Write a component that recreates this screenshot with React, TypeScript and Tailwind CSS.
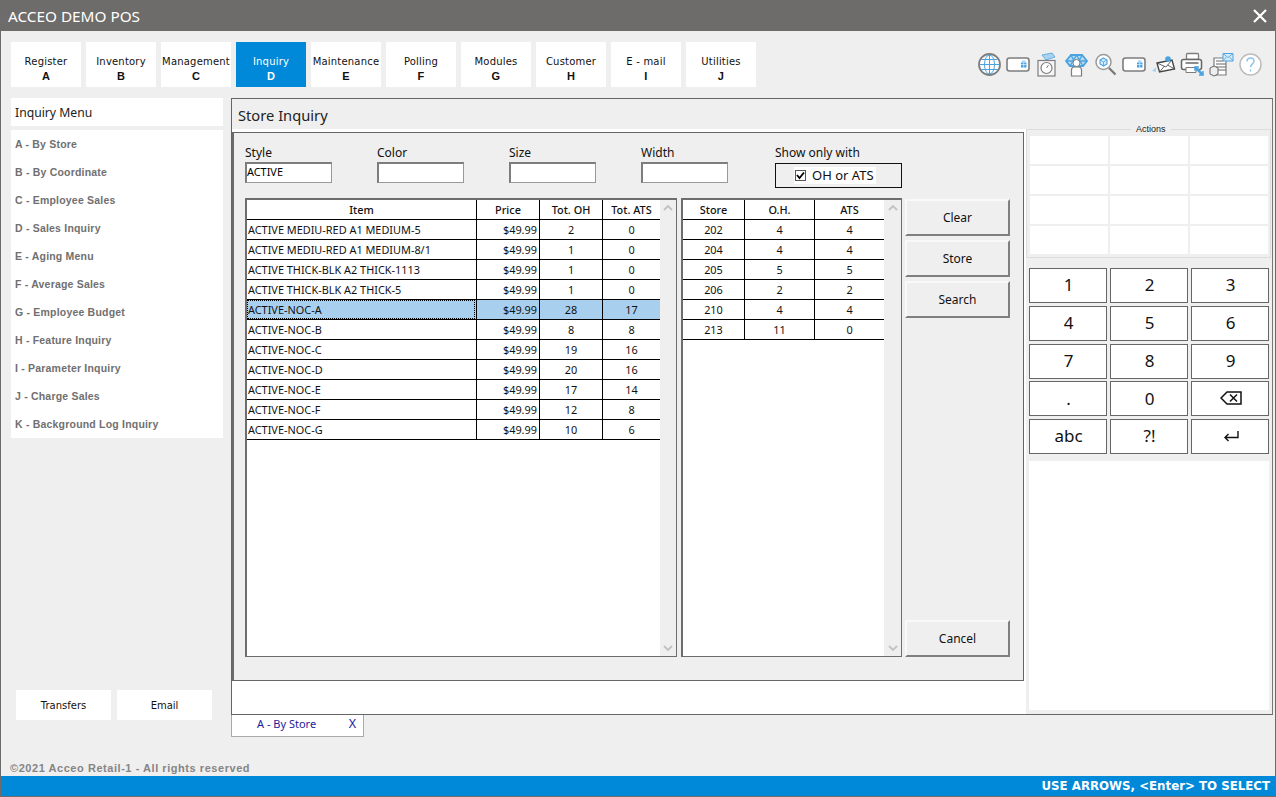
import type { ReactNode } from "react";

const tabs = [
  ["Register", "A"], ["Inventory", "B"], ["Management", "C"], ["Inquiry", "D"], ["Maintenance", "E"],
  ["Polling", "F"], ["Modules", "G"], ["Customer", "H"], ["E - mail", "I"], ["Utilities", "J"],
];

const menu = [
  "A - By Store", "B - By Coordinate", "C - Employee Sales", "D - Sales Inquiry", "E - Aging Menu", "F - Average Sales",
  "G - Employee Budget", "H - Feature Inquiry", "I - Parameter Inquiry", "J - Charge Sales", "K - Background Log Inquiry",
];

const items: [string, string, number, number][] = [
  ["ACTIVE MEDIU-RED A1 MEDIUM-5", "$49.99", 2, 0],
  ["ACTIVE MEDIU-RED A1 MEDIUM-8/1", "$49.99", 1, 0],
  ["ACTIVE THICK-BLK A2 THICK-1113", "$49.99", 1, 0],
  ["ACTIVE THICK-BLK A2 THICK-5", "$49.99", 1, 0],
  ["ACTIVE-NOC-A", "$49.99", 28, 17],
  ["ACTIVE-NOC-B", "$49.99", 8, 8],
  ["ACTIVE-NOC-C", "$49.99", 19, 16],
  ["ACTIVE-NOC-D", "$49.99", 20, 16],
  ["ACTIVE-NOC-E", "$49.99", 17, 14],
  ["ACTIVE-NOC-F", "$49.99", 12, 8],
  ["ACTIVE-NOC-G", "$49.99", 10, 6],
];

const stores = [
  [202, 4, 4], [204, 4, 4], [205, 5, 5], [206, 2, 2], [210, 4, 4], [213, 11, 0],
];

const G = "#7d7d7d";
const B = "#4aa3e0";

function Ico({ children }: { children: ReactNode }) {
  return (
    <svg width="25" height="25" viewBox="0 0 25 25" fill="none" className="shrink-0 w-[25px]">
      {children}
    </svg>
  );
}

function Globe() {
  return (
    <Ico>
      <circle cx="12.5" cy="12.5" r="10.5" stroke={G} strokeWidth="1.8" fill="#fff" />
      <ellipse cx="12.5" cy="12.5" rx="5" ry="9.5" stroke={B} />
      <path d="M3 12.5h19M4.5 7.5h16M4.5 17.5h16M12.5 3v19" stroke={B} />
    </Ico>
  );
}

function Card() {
  return (
    <Ico>
      <rect x="1" y="6" width="22" height="13" rx="2.5" stroke={G} strokeWidth="1.6" fill="#fff" />
      <path d="M15 10.5h5.500v5H15z" fill={B} />
      <path d="M16 8.500h3.500v1.500H16z" fill="#a9d3f0" />
      <path d="M15 12.500h5.500M17.700 10.500v5" stroke="#fff" strokeWidth=".6" />
    </Ico>
  );
}

function Clock() {
  return (
    <Ico>
      <rect x="3" y="8.500" width="17" height="15.500" stroke={G} strokeWidth="1.2" fill="#f6f6f6" />
      <circle cx="11.500" cy="16" r="5.500" stroke={G} strokeWidth="1.2" fill="#fff" />
      <path d="M11.500 16l2-3" stroke={G} />
      <path d="M7 3l10-2 3 4-9 3z" fill="#a9d3f0" stroke={B} strokeWidth=".8" />
    </Ico>
  );
}

function People() {
  return (
    <Ico>
      <path d="M2 9l5-6h11l5 6-4 5H6z" fill="#bcdcf3" stroke={B} strokeWidth="1.800" />
      <path d="M2 9h21M7 3l5.500 11L18 3M6 14l6.500-11L19 14" stroke={B} strokeWidth="1.300" />
      <circle cx="12.500" cy="11" r="3.500" fill="#fff" stroke={G} />
      <path d="M7.500 24v-6q0-3 3-3h4q3 0 3 3v6z" fill="#fff" stroke={G} strokeWidth="1.200" />
    </Ico>
  );
}

function Search() {
  return (
    <Ico>
      <circle cx="10.500" cy="10" r="7.500" stroke="#9a9a9a" strokeWidth="1.500" fill="#fff" />
      <path d="M16 16l6.500 6.500" stroke="#777" strokeWidth="2.200" />
      <path d="M10.500 6l3.500 2v4l-3.500 2-3.500-2V8z" stroke={B} strokeWidth="1.100" fill="#d7ebf8" />
      <path d="M7 8l3.500 2L14 8M10.500 10v4" stroke={B} strokeWidth=".8" />
    </Ico>
  );
}

function Mail() {
  return (
    <Ico>
      <path d="M6 11l15-3 2.500 9-15 3z" fill="#fff" stroke="#444" strokeWidth="1.400" />
      <path d="M6 11l9 4 6-7M8.500 20l5-6M23.500 17l-7-4" stroke="#555" strokeWidth=".9" />
      <circle cx="17" cy="7" r="2.800" fill={B} />
      <path d="M1 19l4-4v5z" fill="#a9d3f0" />
    </Ico>
  );
}

function Printer() {
  return (
    <Ico>
      <rect x="6.500" y="1.500" width="12" height="6" rx="1" stroke={G} strokeWidth="1.300" fill="#fff" />
      <rect x="1.500" y="7.500" width="20" height="10" rx="2" stroke="#666" strokeWidth="1.500" fill="#fff" />
      <path d="M5.500 11h13" stroke="#666" strokeWidth="1.500" />
      <path d="M6 15.500h10v5H6z" stroke={G} fill="#fff" />
      <path d="M15 15l8 8" stroke={B} strokeWidth="2.500" />
      <path d="M15 19v-4h4M23 19v4h-4" stroke={B} strokeWidth="1.400" />
    </Ico>
  );
}

function MailForm() {
  return (
    <Ico>
      <path d="M5 6h12v17H5z" fill="#fff" stroke={G} strokeWidth="1.200" />
      <path d="M7 9h7M7 12h10M7 15h10M7 18h10" stroke="#666" strokeWidth="1.200" />
      <path d="M1 16l4-2 4 2v6l-4 2-4-2z" fill="#eee" stroke="#666" />
      <path d="M14 1.500h10v7.500H14z" fill="#d7ebf8" stroke={B} />
      <path d="M14 1.500l5 4 5-4M14 9l3.500-4M24 9l-3.500-4" stroke={B} strokeWidth=".8" />
    </Ico>
  );
}

function Help() {
  return (
    <Ico>
      <circle cx="12.500" cy="12.500" r="10.500" stroke="#bcbcbc" strokeWidth="1.500" fill="#fff" />
      <path d="M9 9.500q.2-3.500 3.500-3.500 3.500 0 3.500 3.200c0 2.500-3.500 3-3.500 6" stroke="#8fc4ea" strokeWidth="1.500" />
      <path d="M12.500 17.500v2" stroke="#8fc4ea" strokeWidth="1.500" />
    </Ico>
  );
}

function Field({ label, value, className }: { label: string; value?: string; className: string }) {
  return (
    <div className={className}>
      <div className="text-[12px] leading-[16px] h-[16px] text-[#111]">{label}</div>
      <div className="mt-[1px] h-[21px] w-[87px] bg-white border-2 border-[#7d7d7d] border-r border-b border-r-[#999] border-b-[#999] text-[10.900px] leading-[15px] text-black">
        {value}
      </div>
    </div>
  );
}

function Cell({ children, className }: { children?: ReactNode; className: string }) {
  return <div className={`h-[20px] leading-[20px] border-b border-black ${className}`}>{children}</div>;
}

function Scroll() {
  return (
    <div className="flex-1 bg-[#efefef] flex flex-col justify-between items-center py-[5px]">
      <svg width="10" height="6" viewBox="0 0 10 6" fill="none"><path d="M1 5l4-4 4 4" stroke="#c2c2c2" strokeWidth="1.800" /></svg>
      <svg width="10" height="6" viewBox="0 0 10 6" fill="none"><path d="M1 1l4 4 4-4" stroke="#c2c2c2" strokeWidth="1.800" /></svg>
    </div>
  );
}

function ActionButton({ label, className }: { label: string; className?: string }) {
  return (
    <div className={`h-[37px] w-[105px] flex items-center justify-center bg-[#efefef] border-2 border-[#f9f9f9] border-r-[#7f7f7f] border-b-[#7f7f7f] text-[12px] text-[#111] ${className ?? ""}`}>
      {label}
    </div>
  );
}

function Key({ children }: { children: ReactNode }) {
  return (
    <div className="h-[35px] pb-[1px] pl-[1px] flex items-center justify-center bg-white border border-[#666] text-[17px] text-[#111]">
      {children}
    </div>
  );
}

export default function App() {
  return (
    <div className="w-[1276px] h-[797px] flex flex-col bg-[#efefef] border border-[#6e6c6a] overflow-hidden font-['Noto_Sans',sans-serif]">
      <div className="h-[30px] shrink-0 bg-[#6e6c6a] flex items-center justify-between pl-[7px] pr-[7px] text-white text-[15.300px]">
        <span>ACCEO DEMO POS</span>
        <svg width="16" height="16" viewBox="0 0 16 16" fill="none"><path d="M2 2l12 12M14 2L2 14" stroke="#fff" strokeWidth="2.200" /></svg>
      </div>

      <div className="flex items-center pl-[10px] pt-[11px] h-[56px] shrink-0">
        <div className="flex gap-[5px]">
          {tabs.map(([name, key]) => (
            <div
              key={key}
              className={`w-[70px] h-[45px] flex flex-col items-center pt-[12px] leading-[15px] tracking-[0.2px] font-['DejaVu_Sans',sans-serif] ${name === "Inquiry" ? "bg-[#0089d9] text-white" : "bg-white text-[#111]"}`}
            >
              <span className="whitespace-nowrap text-[10px]">{name}</span>
              <span className="font-['Liberation_Sans',sans-serif] font-bold text-[11px]">{key}</span>
            </div>
          ))}
        </div>
        <div className="flex gap-[4px] ml-[221px]">
          <Globe /><Card /><Clock /><People /><Search /><Card /><Mail /><Printer /><MailForm /><Help />
        </div>
      </div>

      <div className="flex mt-[11px] pl-[10px] h-[617px] shrink-0">
        <div className="w-[212px] shrink-0 flex flex-col">
          <div className="h-[28px] bg-white text-[12.200px] leading-[30px] pl-[4px] text-[#222]">Inquiry Menu</div>
          <div className="mt-[4px] h-[308px] bg-white">
            {menu.map((m) => (
              <div key={m} className="h-[28px] leading-[28px] pl-[4px] text-[10.500px] font-bold text-[#707070] font-['Liberation_Sans',sans-serif] tracking-[0.2px]">{m}</div>
            ))}
          </div>
          <div className="mt-auto mb-[-5px] flex gap-[6px] pl-[5px]">
            <div className="w-[95px] h-[30px] pt-[1px] bg-white flex items-center justify-center text-[10px] font-['DejaVu_Sans',sans-serif] text-[#111]">Transfers</div>
            <div className="w-[95px] h-[30px] pt-[1px] bg-white flex items-center justify-center text-[10px] font-['DejaVu_Sans',sans-serif] text-[#111]">Email</div>
          </div>
        </div>

        <div className="ml-[8px] w-[1042px] h-[617px] shrink-0 border border-[#666] border-r-[#777] bg-white flex flex-col">
          <div className="h-[30px] bg-[#efefef] pl-[6px] text-[14.700px] leading-[32px] text-[#222] shrink-0">Store Inquiry</div>
          <div className="flex flex-1">
            <div className="w-[792px] shrink-0 pt-[3px]">
              <div className="h-[549px] w-[792px] bg-[#efefef] border-2 border-t border-r border-b border-[#666] border-l-[#6b6b6b] pl-[11px] pt-[12px] flex flex-col">
                <div className="flex h-[44px]">
                  <Field label="Style" value="ACTIVE" className="w-[132px]" />
                  <Field label="Color" className="w-[132px]" />
                  <Field label="Size" className="w-[132px]" />
                  <Field label="Width" className="w-[134px]" />
                  <div>
                    <div className="text-[12px] leading-[16px] h-[16px] text-[#111]">Show only with</div>
                    <div className="mt-[2px] w-[127px] h-[25px] border border-[#111] flex items-center pl-[18px]">
                      <div className="flex items-center bg-white h-[17px] pl-[1px] pr-[2px]">
                        <div className="w-[11px] h-[11px] border border-[#555] bg-white flex items-center justify-center">
                          <svg width="9" height="9" viewBox="0 0 9 9" fill="none"><path d="M1 4l2.500 3L8 1.500" stroke="#000" strokeWidth="1.800" /></svg>
                        </div>
                        <span className="ml-[6px] text-[13px] text-[#111]">OH or ATS</span>
                      </div>
                    </div>
                  </div>
                </div>

                <div className="flex mt-[9px] h-[459px]">
                  <div className="w-[432px] h-[459px] flex bg-white border-2 border-r border-b border-[#6d6d6d] text-[10.900px] text-[#111]">
                    <div className="w-[413px] shrink-0">
                      <div className="grid grid-cols-[230px_63px_63px_57px]">
                        <Cell className="text-center border-r font-medium">Item</Cell>
                        <Cell className="text-center border-r font-medium">Price</Cell>
                        <Cell className="text-center border-r font-medium">Tot. OH</Cell>
                        <Cell className="text-center font-medium">Tot. ATS</Cell>
                        {items.map(([name, price, oh, ats]) => {
                          const sel = name === "ACTIVE-NOC-A";
                          const bg = sel ? "bg-[#a9cfef]" : "";
                          return (
                            <div key={name} className="contents">
                              <Cell className={`border-r pl-[1px] whitespace-nowrap ${bg}`}>
                                <div className={sel ? "h-[19px] ml-[-1px] mr-[1px] pl-[1px] outline outline-dotted outline-black -outline-offset-1" : ""}>{name}</div>
                              </Cell>
                              <Cell className={`border-r text-right pr-[2px] ${bg}`}>{price}</Cell>
                              <Cell className={`border-r text-center ${bg}`}>{oh}</Cell>
                              <Cell className={`text-center ${bg}`}>{ats}</Cell>
                            </div>
                          );
                        })}
                      </div>
                    </div>
                    <Scroll />
                  </div>

                  <div className="ml-[4px] w-[221px] h-[459px] flex bg-white border-2 border-r border-b border-[#6d6d6d] text-[10.900px] text-[#111]">
                    <div className="w-[201px] shrink-0">
                      <div className="grid grid-cols-[62px_70px_69px]">
                        <Cell className="text-center border-r font-medium">Store</Cell>
                        <Cell className="text-center border-r font-medium">O.H.</Cell>
                        <Cell className="text-center font-medium">ATS</Cell>
                        {stores.map(([store, oh, ats]) => (
                          <div key={store} className="contents">
                            <Cell className="text-center border-r">{store}</Cell>
                            <Cell className="text-center border-r">{oh}</Cell>
                            <Cell className="text-center">{ats}</Cell>
                          </div>
                        ))}
                      </div>
                    </div>
                    <Scroll />
                  </div>

                  <div className="ml-[3px] pt-[1px] flex flex-col">
                    <ActionButton label="Clear" />
                    <ActionButton label="Store" className="mt-[4px]" />
                    <ActionButton label="Search" className="mt-[4px]" />
                    <ActionButton label="Cancel" className="mt-auto" />
                  </div>
                </div>
              </div>
            </div>

            <div className="w-[246px] shrink-0 bg-[#efefef] ml-[2px] flex flex-col relative">
              <div className="absolute left-[105px] top-[-6px] px-[5px] bg-[#efefef] text-[9px] leading-[12px] text-[#222] font-['Liberation_Sans',sans-serif]">Actions</div>
              <div className="h-[129px] w-[245px] border border-[#dcdcdc] pt-[6px] pl-[3px]">
                <div className="grid grid-cols-[78px_78px_78px] gap-[2px] auto-rows-[28px]">
                  {Array.from({ length: 12 }).map((_, i) => (
                    <div key={i} className="bg-white" />
                  ))}
                </div>
              </div>
              <div className="grid grid-cols-[78px_78px_78px] gap-x-[3px] gap-y-[2.750px] mt-[10px] ml-[3px]">
                {["1", "2", "3", "4", "5", "6", "7", "8", "9", "."].map((k) => (
                  <Key key={k}>{k}</Key>
                ))}
                <Key>0</Key>
                <Key>
                  <svg width="22" height="14" viewBox="0 0 22 14" fill="none">
                    <path d="M7 1h14v12H7L1 7z" stroke="#111" strokeWidth="1.500" />
                    <path d="M10 3.500l7 7M17 3.500l-7 7" stroke="#111" strokeWidth="1.500" />
                  </svg>
                </Key>
                <Key>abc</Key>
                <Key>?!</Key>
                <Key>
                  <svg width="16" height="11" viewBox="0 0 16 11" fill="none">
                    <path d="M15 0v6.500H2M5.500 3L2 6.500 5.500 10" stroke="#111" strokeWidth="1.400" />
                  </svg>
                </Key>
              </div>
              <div className="mt-[7px] ml-[3px] w-[240px] h-[249px] bg-white" />
            </div>
          </div>
        </div>
      </div>

      <div className="flex pl-[230px] shrink-0">
        <div className="w-[133px] h-[22px] pb-[3px] bg-white border border-t-0 border-[#aaa] flex items-center justify-between pl-[25px] pr-[7px] text-[#1b1b9e] text-[11px]">
          <span>A - By Store</span>
          <span className="text-[12.500px]">X</span>
        </div>
      </div>

      <div className="mt-auto h-[15px] pl-[9px] text-[11px] leading-[14px] font-bold text-[#858585] font-['Liberation_Sans',sans-serif] tracking-[0.55px]">©2021 Acceo Retail-1 - All rights reserved</div>
      <div className="h-[20px] pt-[1px] shrink-0 bg-[#0089d9] flex items-center justify-end pr-[5px] text-white text-[11.800px] font-bold font-['DejaVu_Sans',sans-serif]">USE ARROWS, &lt;Enter&gt; TO SELECT</div>
    </div>
  );
}
